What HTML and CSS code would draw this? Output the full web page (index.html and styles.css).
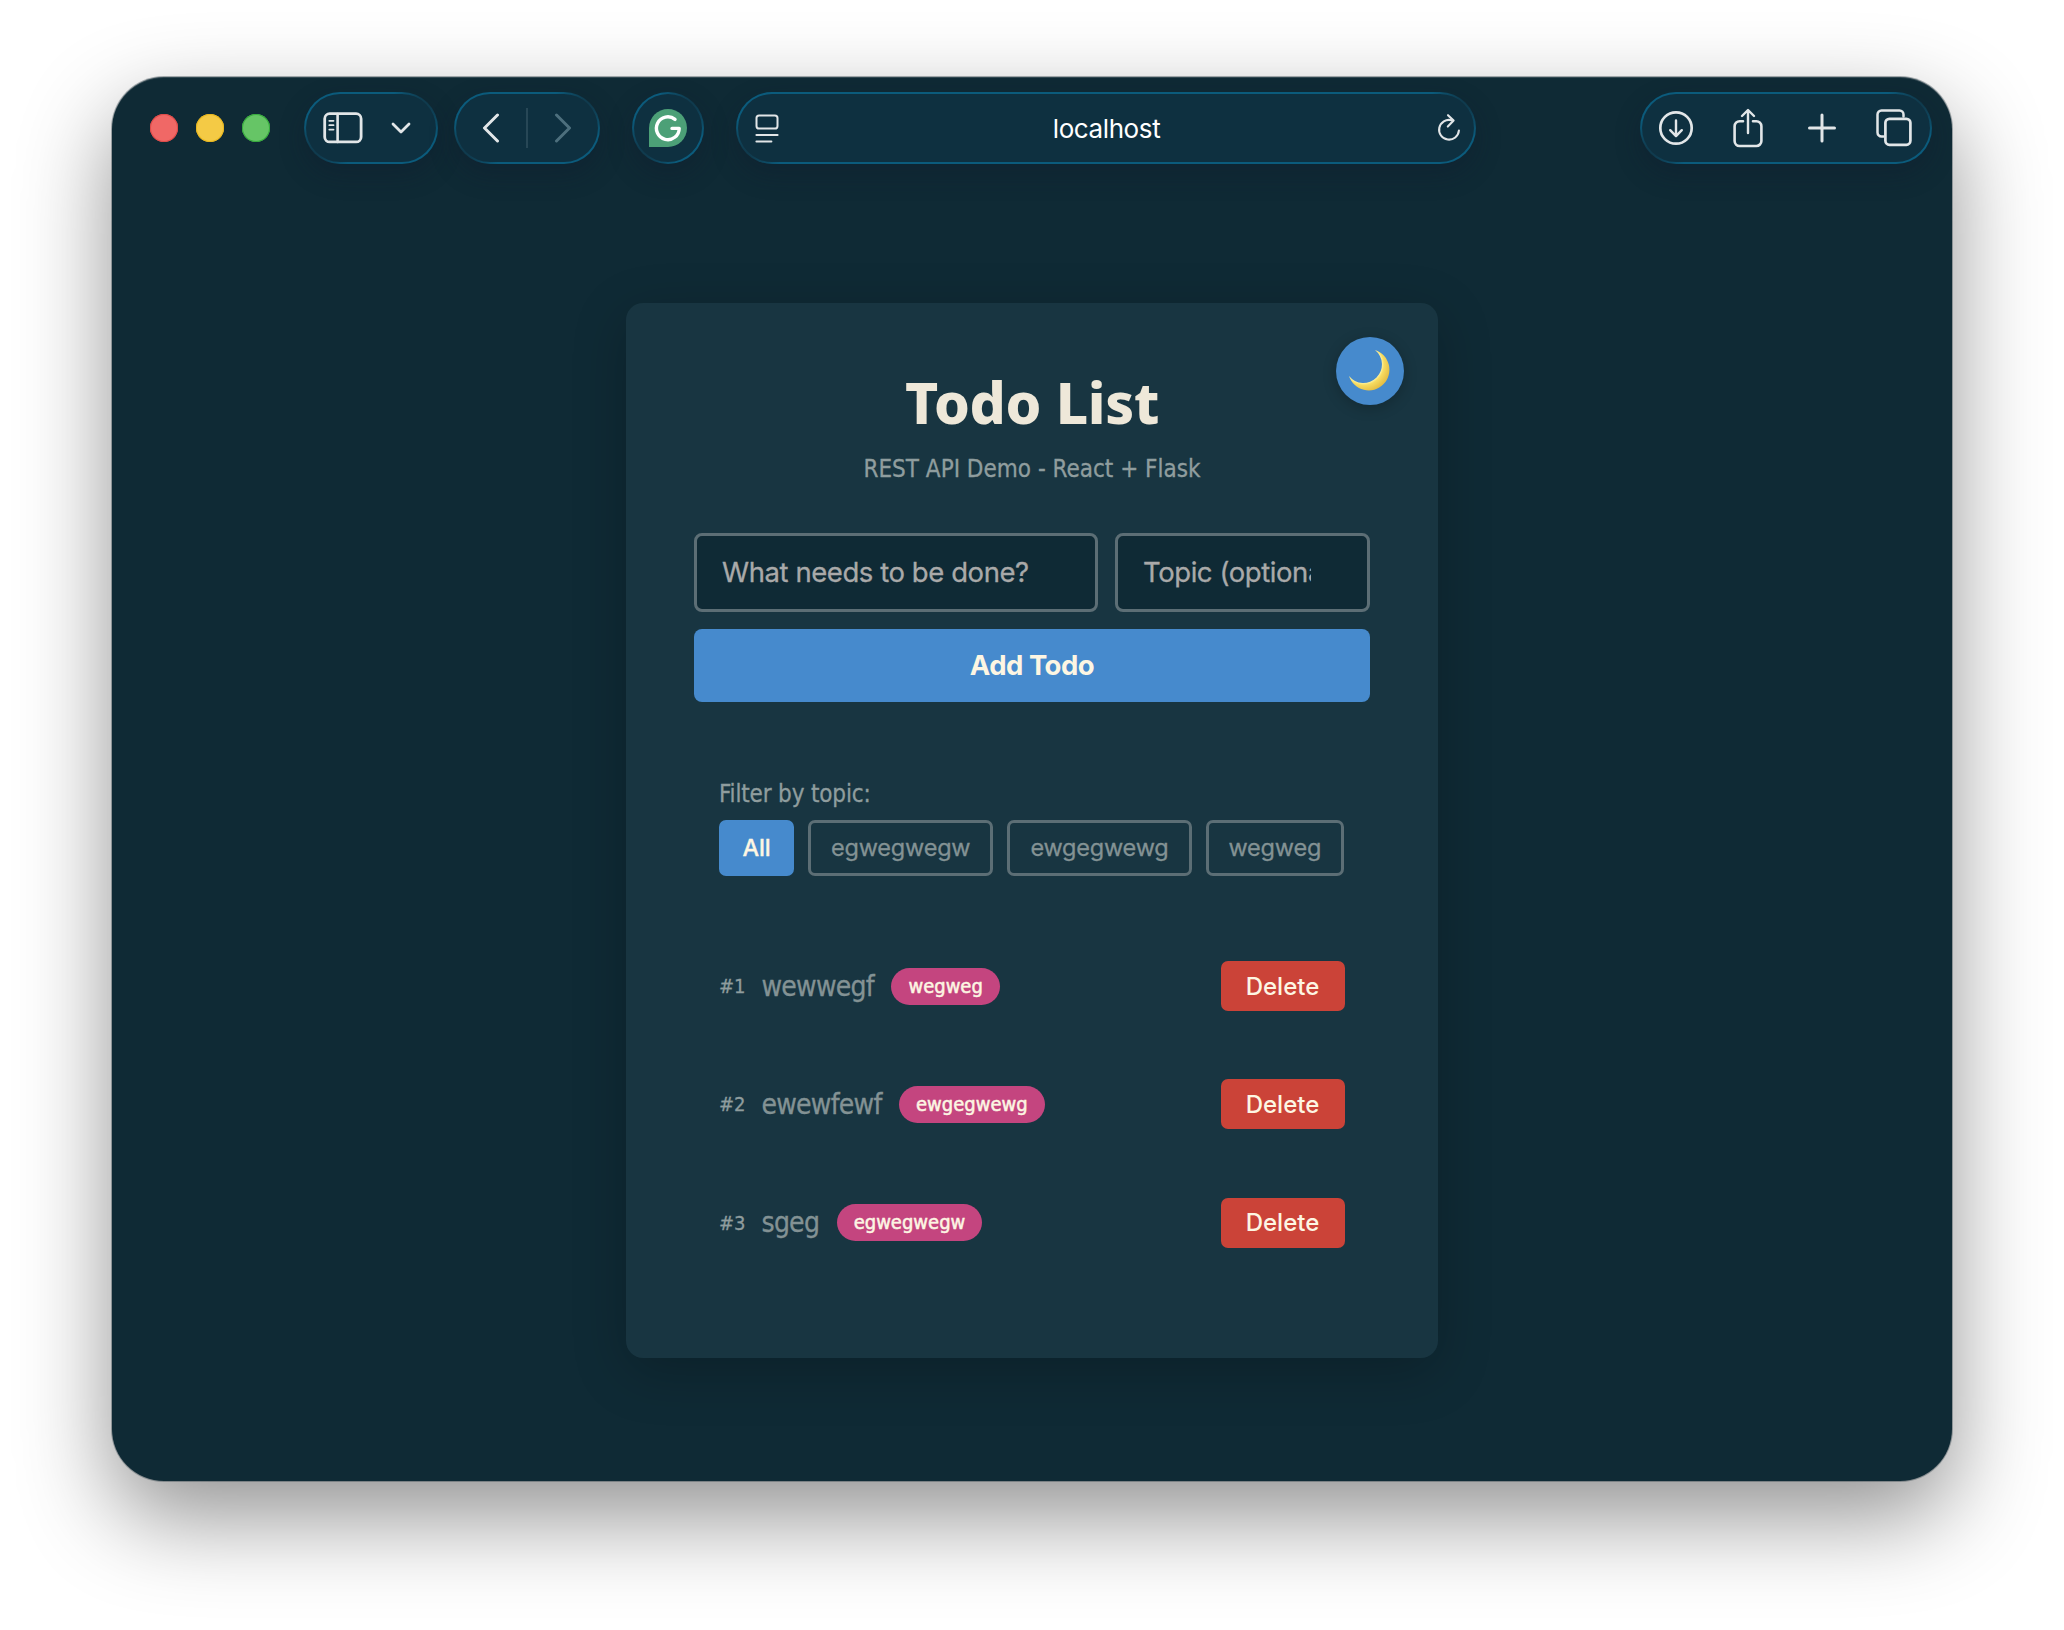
FILE: index.html
```
<!DOCTYPE html>
<html lang="en">
<head>
<meta charset="utf-8">
<title>Todo List</title>
<link rel="stylesheet" href="styles.css">
</head>
<body>
<div class="window">
  <header class="toolbar">
    <div class="lights">
      <span class="light light-close"></span>
      <span class="light light-min"></span>
      <span class="light light-max"></span>
    </div>
    <div class="pill pill-sidebar">
      <svg class="icon" width="40" height="32" viewBox="0 0 40 32"><rect x="1.7" y="1.7" width="36.4" height="28.2" rx="5" stroke-width="2.8"/><path d="M14.6 2v28" stroke-width="2.6"/><path d="M6.3 8.8h4.2M6.3 13.2h4.2M6.3 17.6h4.2" stroke-width="1.8"/></svg>
      <svg class="icon" width="20" height="12" viewBox="0 0 20 12"><path d="M2 2l8 8 8-8" stroke-width="2.8"/></svg>
    </div>
    <div class="pill pill-nav">
      <svg class="icon" width="18" height="30" viewBox="0 0 18 30"><path d="M15.5 2L2.5 15l13 13" stroke-width="3"/></svg>
      <span class="divider"></span>
      <svg class="icon icon-off" width="18" height="30" viewBox="0 0 18 30"><path d="M2.5 2l13 13-13 13" stroke-width="3"/></svg>
    </div>
    <div class="pill pill-ext">
      <svg width="38" height="38" viewBox="0 0 38 38" fill="none"><path d="M19 0a19 19 0 1 1 0 38H0V19A19 19 0 0 1 19 0z" fill="#4ca077"/><path d="M26 10.4A11.4 11.4 0 1 0 30.2 19.4H23" stroke="#fff" stroke-width="3.4" stroke-linecap="round" stroke-linejoin="round"/></svg>
    </div>
    <div class="pill pill-url">
      <svg class="icon" width="24" height="29" viewBox="0 0 24 29"><rect x="1.5" y="1.5" width="21" height="13" rx="2.6" stroke-width="2"/><path d="M1.4 21h21.2M1.4 27.4h15" stroke-width="2"/></svg>
      <span class="address">localhost</span>
      <svg class="icon" width="24" height="30" viewBox="0 0 24 30"><path d="M21.9 17.5A9.9 9.9 0 1 1 14.6 7.2" stroke-width="2.1"/><path d="M11 2.2l5.6 5.4-5.8 6" stroke-width="2.1"/></svg>
    </div>
    <div class="pill pill-actions">
      <svg class="icon" width="36" height="38" viewBox="0 0 36 38"><circle cx="18" cy="19" r="15.7" stroke-width="2.7"/><path d="M18 11.4v15M12.2 21.2l5.8 5.9 5.8-5.9" stroke-width="2.4"/></svg>
      <svg class="icon icon-share" width="32" height="40" viewBox="0 0 32 40"><path d="M11 13.200H7.600A5 5 0 0 0 2.600 18.200V33A5 5 0 0 0 7.600 38h16.800a5 5 0 0 0 5-5V18.200a5 5 0 0 0-5-5H21" stroke-width="2.6"/><path d="M16 25V2.500M10 8l6-6 6 6" stroke-width="2.4"/></svg>
      <svg class="icon" width="30" height="30" viewBox="0 0 30 30"><path d="M15 2v26M2.500 15h25" stroke-width="3"/></svg>
      <svg class="icon" width="36" height="38" viewBox="0 0 36 38"><path d="M7.500 27.500H5.500a4 4 0 0 1-4-4V5.500a4 4 0 0 1 4-4h18a4 4 0 0 1 4 4v2" stroke-width="2.500"/><rect x="9.400" y="9.800" width="25" height="26" rx="4" stroke-width="2.700"/></svg>
    </div>
  </header>

  <main class="card">
    <button class="toggle" aria-label="Toggle theme">
      <svg width="68" height="68" viewBox="0 0 68 68">
        <defs><radialGradient id="moon" gradientUnits="userSpaceOnUse" cx="27.500" cy="27.500" r="27"><stop offset=".68" stop-color="#fff3a0"/><stop offset=".76" stop-color="#f7dc62"/><stop offset="1" stop-color="#e6bf45"/></radialGradient></defs>
        <path d="M39 13A20.700 20.700 0 1 1 13 39A18.500 18.500 0 1 0 39 13Z" fill="url(#moon)"/>
      </svg>
    </button>
    <h1 class="title">Todo List</h1>
    <p class="subtitle">REST API Demo - React + Flask</p>

    <form class="form">
      <div class="fields">
        <input class="field field-task" placeholder="What needs to be done?">
        <input class="field field-topic" placeholder="Topic (optional)">
      </div>
      <button class="add" type="button">Add Todo</button>
    </form>

    <section class="filters">
      <div class="filter-label">Filter by topic:</div>
      <div class="chips">
        <button class="chip chip-active">All</button>
        <button class="chip">egwegwegw</button>
        <button class="chip">ewgegwewg</button>
        <button class="chip">wegweg</button>
      </div>
    </section>

    <ul class="todos">
      <li class="todo"><span class="num">#1</span><span class="name">wewwegf</span><span class="badge">wegweg</span><button class="delete">Delete</button></li>
      <li class="todo"><span class="num">#2</span><span class="name">ewewfewf</span><span class="badge">ewgegwewg</span><button class="delete">Delete</button></li>
      <li class="todo"><span class="num">#3</span><span class="name">sgeg</span><span class="badge">egwegwegw</span><button class="delete">Delete</button></li>
    </ul>
  </main>
</div>
</body>
</html>
```
FILE: styles.css
```
* { box-sizing: border-box; }

html, body { height: 100%; }

body {
  margin: 0;
  padding: 77px 112px 149px;
  background: #fff;
  overflow: hidden;
  font-family: "DejaVu Sans Condensed", "DejaVu Sans", sans-serif;
}

button, input, .address {
  font-family: Inter, sans-serif;
  border: 0;
  margin: 0;
  padding: 0;
}

.window {
  height: 1404px;
  border-radius: 52px;
  background: #0f2a35;
  box-shadow:
    inset 0 1px 0 rgba(255, 255, 255, .14),
    0 0 0 1px rgba(60, 75, 80, .42),
    0 36px 92px rgba(0, 0, 0, .43);
}

/* Browser toolbar */
.toolbar {
  display: flex;
  padding: 15px 20px 0 38px;
}

.lights {
  display: flex;
  align-items: center;
  gap: 18px;
  margin-right: 34px;
}

.light {
  width: 28px;
  height: 28px;
  border-radius: 50%;
}

.light-close { background: #f06866; box-shadow: inset 0 0 0 1px #e04a48; }
.light-min { background: #f4ca45; box-shadow: inset 0 0 0 1px #e8b61c; }
.light-max { background: #66c566; box-shadow: inset 0 0 0 1px #35ab3b; }

.pill {
  display: flex;
  align-items: center;
  height: 72px;
  border: 2px solid transparent;
  border-radius: 36px;
  background:
    linear-gradient(#0e3040, #0e3040) padding-box,
    radial-gradient(circle at 100% 0, #10384a 14px, transparent 44px) border-box,
    radial-gradient(circle at 0 100%, #10384a 14px, transparent 44px) border-box,
    linear-gradient(#0b5b7c, #0b5b7c) border-box;
  box-shadow: 0 10px 26px rgba(18, 24, 42, .3);
}

.icon {
  flex: none;
  fill: none;
  stroke: #e2e6e8;
  stroke-linecap: round;
  stroke-linejoin: round;
}

.icon-off { stroke: #4d6f7d; }
.icon-share { margin: 0 4px 0 -1px; }

.pill-sidebar { width: 134px; padding-left: 17px; gap: 28px; margin-right: 16px; }
.pill-nav { width: 146px; padding: 0 26px; justify-content: space-between; margin-right: 32px; }
.pill-ext { width: 72px; justify-content: center; margin-right: 32px; }
.pill-url { width: 740px; padding: 0 13px 0 17px; justify-content: space-between; }
.pill-actions { width: 292px; padding: 0 18px 0 16px; justify-content: space-between; margin-left: auto; }

.divider { width: 2px; height: 40px; background: #274756; }

.address {
  margin-right: 3px;
  color: #fff;
  font-size: 26px;
  letter-spacing: -.4px;
}

/* Card */
.card {
  position: relative;
  width: 812px;
  height: 1055px;
  margin: 139px auto 0;
  padding: 67px 68px 0;
  border-radius: 17px;
  background: #183541;
  box-shadow: 0 14px 54px rgba(0, 0, 0, .22);
}

.toggle {
  position: absolute;
  top: 34px;
  right: 34px;
  width: 68px;
  height: 68px;
  border-radius: 50%;
  background: #468acd;
  box-shadow: 0 3px 14px rgba(0, 0, 0, .22);
}

.toggle svg { display: block; }

.title {
  margin: 0 0 19px;
  color: #eee8d9;
  font-family: "Noto Sans", sans-serif;
  font-size: 57px;
  font-weight: 800;
  letter-spacing: -.3px;
  line-height: 64px;
  text-align: center;
}

.subtitle {
  margin: 0 0 48px;
  color: #8f9d9e;
  font-size: 24px;
  line-height: 32px;
  text-align: center;
}

.subtitle, .filter-label, .num, .name { -webkit-text-stroke: .3px currentColor; }

.form, .fields { display: flex; gap: 17px; }
.form { flex-direction: column; }

.field {
  height: 79px;
  padding: 0 25px 1px;
  border: 3px solid #5c6e75;
  border-radius: 8px;
  background: #0f2a35;
  font-size: 27.5px;
  letter-spacing: -.43px;
}

.field::placeholder { color: #a9a9a9; opacity: 1; -webkit-text-stroke: .3px #a9a9a9; }
.field-task { width: 404px; }
.field-topic { width: 255px; padding-right: 56px; }

.add {
  height: 73px;
  padding-bottom: 2px;
  border-radius: 8px;
  background: #468acd;
  color: #fdf6e3;
  font-size: 27.5px;
  font-weight: 650;
  letter-spacing: -.5px;
}

.filters { margin: 76px 0 0; padding: 0 25px; }

.filter-label {
  margin-bottom: 10px;
  color: #8f9d9e;
  font-size: 24px;
  letter-spacing: -.15px;
  line-height: 32px;
}

.chips { display: flex; gap: 14px; }

.chip {
  height: 56px;
  padding: 0 20px 1px;
  border: 3px solid #5c6e75;
  border-radius: 7px;
  background: transparent;
  color: #839294;
  font-size: 23.5px;
  letter-spacing: -.2px;
  -webkit-text-stroke: .3px currentColor;
}

.chip-active {
  width: 75px;
  padding: 0 0 1px;
  border-color: #468acd;
  background: #468acd;
  color: #fdf6e3;
  font-weight: 500;
}

.todos {
  margin: 51px 0 0;
  padding: 0 25px;
  list-style: none;
}

.todo {
  display: flex;
  align-items: center;
  height: 118.300px;
}

.num {
  width: 42.5px;
  color: #8f9d9e;
  font-size: 20px;
}

.name {
  margin-right: 17.500px;
  color: #839294;
  font-size: 28px;
  letter-spacing: -.75px;
}

.badge {
  height: 37px;
  padding: 0 17px;
  border-radius: 19px;
  background: #c4457f;
  color: #fdf6e3;
  font-size: 20px;
  line-height: 37px;
  -webkit-text-stroke: .5px #fdf6e3;
}

.delete {
  width: 124px;
  height: 50px;
  margin-left: auto;
  padding-right: 1px;
  border-radius: 7px;
  background: #cb4338;
  color: #fdf6e3;
  font-size: 24px;
  font-weight: 500;
}
```
